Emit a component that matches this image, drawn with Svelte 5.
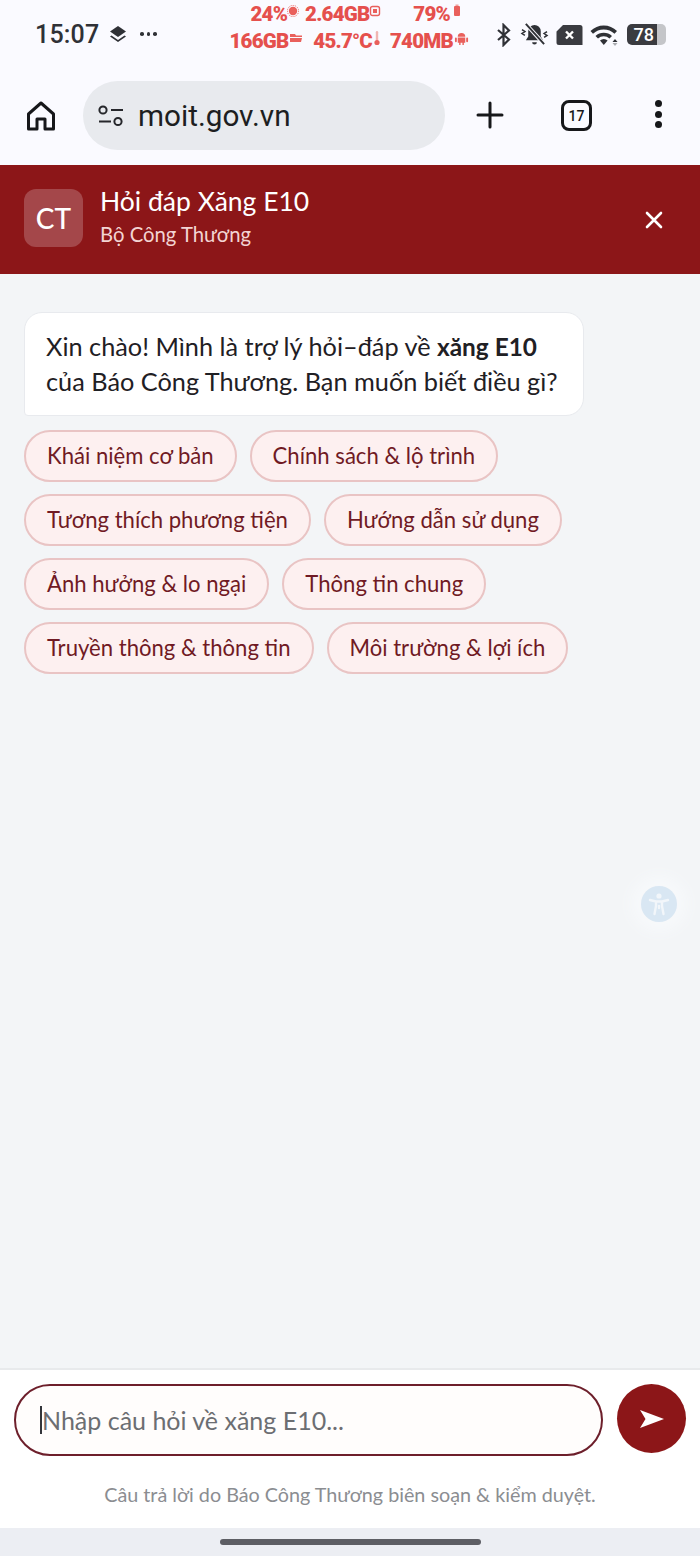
<script>
  const chipRows = [
    ['Khái niệm cơ bản', 'Chính sách & lộ trình'],
    ['Tương thích phương tiện', 'Hướng dẫn sử dụng'],
    ['Ảnh hưởng & lo ngại', 'Thông tin chung'],
    ['Truyền thông & thông tin', 'Môi trường & lợi ích']
  ];
</script>

<div class="page">
  <div class="statusbar">
    <div class="clock">15:07</div>
    <svg class="layers" viewBox="0 0 20 20" width="20" height="20">
      <path d="M10 2 L18 7.5 L10 13 L2 7.5 Z" fill="#2f3136" />
      <path d="M3.5 11.5 L10 16 L16.5 11.5 L18 12.6 L10 18 L2 12.6 Z" fill="#2f3136" />
    </svg>
    <div class="dots"><i></i><i></i><i></i></div>

    <div class="stats">
      <div class="stat-row top">
        <span>24%</span>
        <svg viewBox="0 0 12 12" width="12" height="12"><circle cx="6" cy="6" r="4.2" fill="#e9605c" /><circle cx="6" cy="6" r="5.6" fill="none" stroke="#e9605c" stroke-dasharray="1 1" /></svg>
        <span class="gb">2.64GB</span>
        <svg viewBox="0 0 12 12" width="12" height="12"><rect x="1.5" y="1.5" width="9" height="9" rx="2" fill="none" stroke="#e9605c" stroke-width="1.4" /><rect x="4" y="4" width="4" height="4" fill="#e9605c" /></svg>
        <span class="pct">79%</span>
        <svg viewBox="0 0 8 14" width="8" height="14"><rect x="1" y="2" width="6" height="10" rx="1" fill="#e9605c" /><rect x="2.5" y="0.5" width="3" height="1.5" fill="#f0a09d" /></svg>
      </div>
      <div class="stat-row bottom">
        <span>166GB</span>
        <svg viewBox="0 0 14 10" width="14" height="10"><path d="M1 1 H6 L7 2.5 H13 V4 H1 Z M1 5 H13 L12 9 H1 Z" fill="#e9605c" /></svg>
        <span class="temp">45.7°C</span>
        <svg viewBox="0 0 8 16" width="8" height="16"><rect x="2.8" y="1" width="2.4" height="10" rx="1.2" fill="#f0b5b2" /><circle cx="4" cy="12.5" r="2.6" fill="#e9605c" /></svg>
        <span class="ram">740MB</span>
        <svg viewBox="0 0 16 16" width="15" height="15"><path d="M4 6 a4 4 0 0 1 8 0 Z M4 7 H12 V12.5 H10.5 V15 H9 V12.5 H7 V15 H5.5 V12.5 H4 Z" fill="#e9605c" /><rect x="1" y="7" width="2" height="5" rx="1" fill="#e9605c" /><rect x="13" y="7" width="2" height="5" rx="1" fill="#e9605c" /></svg>
      </div>
    </div>

    <div class="sys-icons">
      <svg viewBox="0 0 18 24" width="18" height="24"><path d="M3 7 L14 16.5 L8.5 22 V2 L14 7.5 L3 17" fill="none" stroke="#2f3136" stroke-width="2.2" /></svg>
      <svg viewBox="0 0 30 26" width="29" height="25">
        <path d="M15 3 a6.5 6.5 0 0 1 6.5 6.5 V15 L24 19 H6 L8.5 15 V9.5 A6.5 6.5 0 0 1 15 3 Z" fill="#2f3136" />
        <path d="M12.5 21 h5 a2.5 2.5 0 0 1 -5 0 Z" fill="#2f3136" />
        <path d="M6 2 L25 23" stroke="#fafaff" stroke-width="4" />
        <path d="M6 2 L25 23" stroke="#2f3136" stroke-width="2" />
        <path d="M2 8 L5 10 L2 12 L5 14 M28 10 L25 12 L28 14 L25 16" fill="none" stroke="#2f3136" stroke-width="1.6" />
      </svg>
      <svg class="x-sim" viewBox="0 0 27 22" width="27" height="22">
        <path d="M7 1 H24 A2.5 2.5 0 0 1 26.5 3.5 V21 H3 A2.5 2.5 0 0 1 0.5 18.5 V7.5 Z" fill="#3a3b40" />
        <path d="M10 7.5 L17 14.5 M17 7.5 L10 14.5" stroke="#fff" stroke-width="2.4" />
      </svg>
      <svg viewBox="0 0 30 22" width="30" height="22">
        <path d="M0.5 7 A19 19 0 0 1 27 7 L24.5 9.8 A15.5 15.5 0 0 0 3 9.8 Z" fill="#2f3136" />
        <path d="M5.5 12 A12 12 0 0 1 22 12 L19.5 14.6 A8.5 8.5 0 0 0 8 14.6 Z" fill="#2f3136" />
        <path d="M10 16.6 A5.5 5.5 0 0 1 17.6 16.6 L13.8 21 Z" fill="#2f3136" />
        <path d="M25 15 l2.5 3 h-5 Z" fill="#2f3136" />
        <path d="M25 22 l2.5 -3 h-5 Z" fill="#a9abb0" />
      </svg>
      <div class="battery"><span>78</span></div>
    </div>
  </div>

  <div class="toolbar">
    <svg class="home" viewBox="0 0 32 32" width="32" height="32">
      <path d="M3.5 14 L16 3 L28.5 14 V29 H20 V19 H12 V29 H3.5 Z" fill="none" stroke="#16171a" stroke-width="3" stroke-linejoin="round" />
    </svg>
    <div class="omnibox">
      <svg viewBox="0 0 28 24" width="28" height="24">
        <circle cx="6" cy="6" r="3.6" fill="none" stroke="#26272b" stroke-width="2" />
        <path d="M14 6 H26 M2 17.5 H14" stroke="#26272b" stroke-width="2.2" />
        <circle cx="21" cy="17.5" r="3.6" fill="none" stroke="#26272b" stroke-width="2" />
      </svg>
      <span>moit.gov.vn</span>
    </div>
    <svg class="plus" viewBox="0 0 28 28" width="28" height="28">
      <path d="M14 2 V26 M2 14 H26" stroke="#16171a" stroke-width="3" stroke-linecap="round" />
    </svg>
    <div class="tabs">17</div>
    <div class="kebab"><i></i><i></i><i></i></div>
  </div>

  <header class="chat-head">
    <div class="avatar">CT</div>
    <div class="titles">
      <div class="title">Hỏi đáp Xăng E10</div>
      <div class="subtitle">Bộ Công Thương</div>
    </div>
    <svg class="close" viewBox="0 0 20 20" width="20" height="20">
      <path d="M3 3 L17 17 M17 3 L3 17" stroke="#fff" stroke-width="2.6" stroke-linecap="round" />
    </svg>
  </header>

  <main class="chat-body">
    <div class="bubble">
      Xin chào! Mình là trợ lý hỏi–đáp về <b>xăng E10</b><br />của Báo Công Thương. Bạn muốn biết điều gì?
    </div>
    <div class="chips">
      {#each chipRows as row}
        <div class="chip-row">
          {#each row as label}
            <button class="chip">{label}</button>
          {/each}
        </div>
      {/each}
    </div>
    <div class="a11y">
      <svg viewBox="0 0 36 36" width="36" height="36">
        <circle cx="18" cy="18" r="18" fill="#d9e7f3" />
        <circle cx="18" cy="10" r="2.6" fill="#f2f6fa" />
        <path d="M9 14 L15 15.5 V20 L13.5 28 M27 14 L21 15.5 V20 L22.5 28 M15 15.5 H21 M18 20 V22" fill="none" stroke="#f2f6fa" stroke-width="2.4" stroke-linecap="round" />
      </svg>
    </div>
  </main>

  <footer class="composer">
    <div class="input-row">
      <div class="input"><span class="caret"></span>Nhập câu hỏi về xăng E10...</div>
      <button class="send" aria-label="Gửi">
        <svg viewBox="0 0 26 20" width="26" height="20"><path d="M1 1 L25 10 L1 19 L6.5 10 Z" fill="#fff" /></svg>
      </button>
    </div>
    <div class="note">Câu trả lời do Báo Công Thương biên soạn & kiểm duyệt.</div>
  </footer>

  <div class="navbar"><div class="handle"></div></div>
</div>

<style>
  :global(body) {
    margin: 0;
    background: #f3f5f7;
  }

  .page {
    width: 700px;
    height: 1556px;
    display: flex;
    flex-direction: column;
    font-family: Lato, "Noto Sans", sans-serif;
    overflow: hidden;
  }

  /* status bar */
  .statusbar {
    height: 70px;
    flex: none;
    background: #fafaff;
    display: flex;
    align-items: center;
    padding-left: 35px;
    color: #2f3136;
    box-sizing: border-box;
  }
  .clock {
    font-family: Roboto, sans-serif;
    font-size: 25px;
    font-weight: 500;
    letter-spacing: 0.2px;
    width: 73px;
    margin-bottom: 2px;
  }
  .layers {
    margin-bottom: 2px;
  }
  .dots {
    display: flex;
    gap: 3px;
    margin-left: 12px;
    margin-bottom: 2px;
  }
  .dots i {
    width: 3.5px;
    height: 3.5px;
    border-radius: 50%;
    background: #2f3136;
  }
  .stats {
    margin-left: 73px;
    width: 243px;
    display: flex;
    flex-direction: column;
    gap: 6px;
    margin-top: -15px;
    color: #e5504d;
    font-family: Roboto, sans-serif;
    font-weight: 900;
    font-size: 20.5px;
    letter-spacing: -0.8px;
    line-height: 21px;
  }
  .stat-row {
    display: flex;
    align-items: center;
    height: 21px;
  }
  .stat-row svg {
    flex: none;
    margin-bottom: 6px;
  }
  .stat-row.top {
    padding-left: 21px;
  }
  .top .gb {
    margin-left: 6px;
  }
  .top .pct {
    margin-left: 32px;
  }
  .top svg:last-child {
    margin-left: 3px;
  }
  .bottom .temp {
    margin-left: 10px;
  }
  .bottom svg {
    margin-left: 1px;
  }
  .bottom .ram {
    margin-left: 9px;
  }
  .sys-icons {
    margin-left: 22px;
    display: flex;
    align-items: center;
    gap: 7px;
    margin-bottom: 1px;
  }
  .battery {
    width: 39px;
    height: 21px;
    border-radius: 5px;
    background: linear-gradient(90deg, #3a3b40 0 78%, #c4c5c9 78% 100%);
    color: #fff;
    font-family: Roboto, sans-serif;
    font-weight: 500;
    font-size: 18px;
    line-height: 21px;
    padding-left: 7px;
    box-sizing: border-box;
  }

  /* browser toolbar */
  .toolbar {
    height: 95px;
    flex: none;
    background: #fafaff;
    display: flex;
    align-items: flex-start;
    padding: 11px 0 0 25px;
    box-sizing: border-box;
  }
  .home {
    margin-top: 19px;
  }
  .omnibox {
    width: 362px;
    height: 69px;
    margin-left: 26px;
    border-radius: 35px;
    background: #e8eaee;
    display: flex;
    align-items: center;
    gap: 13px;
    padding-left: 14px;
    box-sizing: border-box;
    color: #1d1e21;
    font-family: Roboto, sans-serif;
    font-size: 29.7px;
  }
  .plus {
    margin: 20px 0 0 31px;
  }
  .tabs {
    width: 31px;
    height: 31px;
    box-sizing: border-box;
    margin: 19px 0 0 57px;
    border: 3px solid #16171a;
    border-radius: 8px;
    font-family: Roboto, sans-serif;
    font-size: 14px;
    font-weight: 500;
    color: #16171a;
    display: flex;
    align-items: center;
    justify-content: center;
    line-height: 1;
  }
  .kebab {
    margin: 19px 0 0 63px;
    display: flex;
    flex-direction: column;
    gap: 3.5px;
  }
  .kebab i {
    width: 7px;
    height: 7px;
    border-radius: 50%;
    background: #16171a;
  }

  /* chat header */
  .chat-head {
    height: 109px;
    flex: none;
    background: #8c1618;
    display: flex;
    align-items: center;
    padding: 0 36px 0 24px;
    box-sizing: border-box;
    color: #fff;
  }
  .avatar {
    width: 59px;
    height: 58px;
    border-radius: 12px;
    background: #a4474a;
    display: flex;
    align-items: center;
    justify-content: center;
    font-size: 28px;
    font-weight: 500;
    flex: none;
    margin-top: -3px;
  }
  .titles {
    margin-left: 17px;
    flex: 1;
    margin-top: -6px;
  }
  .title {
    font-size: 26.5px;
    line-height: 34px;
  }
  .subtitle {
    font-size: 20.3px;
    line-height: 32px;
    color: #f3d4d3;
  }

  /* chat body */
  .chat-body {
    flex: 1;
    position: relative;
    background: #f3f5f7;
    padding: 38px 24px 0;
  }
  .bubble {
    width: 560px;
    height: 104px;
    box-sizing: border-box;
    background: #fff;
    border: 1px solid #e8eaee;
    border-radius: 18px 18px 18px 4px;
    padding: 16px 21px 0;
    font-size: 25.3px;
    line-height: 34px;
    color: #1f2024;
  }
  .bubble b {
    font-weight: 700;
    font-size: 24.4px;
  }
  .chips {
    margin-top: 14px;
    display: flex;
    flex-direction: column;
    gap: 12px;
  }
  .chip-row {
    display: flex;
    gap: 13px;
  }
  .chip {
    height: 52px;
    padding: 0 21px 2px;
    border: 2px solid #e9c4c4;
    border-radius: 26px;
    background: #fdf0f0;
    color: #701a24;
    font-family: inherit;
    font-size: 22.1px;
    white-space: nowrap;
  }
  .a11y {
    position: absolute;
    left: 641px;
    top: 612px;
    border-radius: 50%;
    box-shadow: 0 0 14px 10px #f7f9fb;
  }
  .a11y svg {
    display: block;
  }

  /* composer */
  .composer {
    height: 160px;
    flex: none;
    background: #fff;
    border-top: 2px solid #e8eaec;
    box-sizing: border-box;
    padding: 14px 14px 0;
  }
  .input-row {
    display: flex;
    align-items: center;
    gap: 14px;
  }
  .input {
    width: 590px;
    height: 72px;
    box-sizing: border-box;
    border: 2px solid #6d1f2b;
    border-radius: 36px;
    display: flex;
    align-items: center;
    padding-left: 24px;
    font-size: 25px;
    color: #6c6e72;
    background: #fffdfc;
  }
  .caret {
    width: 2px;
    height: 28px;
    background: #33353a;
    margin-right: 0;
  }
  .send {
    width: 69px;
    height: 69px;
    border-radius: 50%;
    border: none;
    padding: 0;
    background: #8c1618;
    display: flex;
    align-items: center;
    justify-content: center;
    flex: none;
    margin-top: -3px;
  }
  .note {
    margin-top: 26px;
    text-align: center;
    font-size: 19.75px;
    line-height: 26px;
    color: #8b8d91;
  }

  .navbar {
    height: 28px;
    flex: none;
    background: #eceef3;
    display: flex;
    justify-content: center;
    padding-top: 11px;
    box-sizing: border-box;
  }
  .handle {
    width: 261px;
    height: 6px;
    border-radius: 3px;
    background: #5d5e64;
  }
</style>
